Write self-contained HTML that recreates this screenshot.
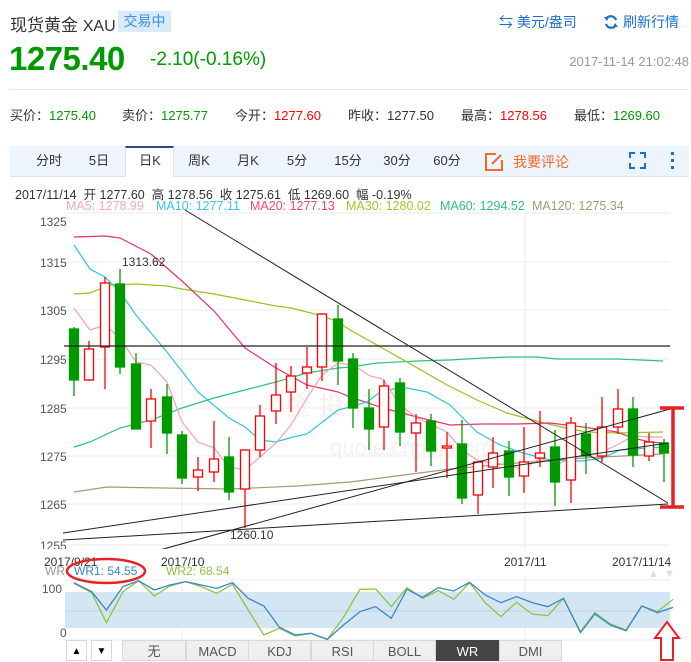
<!DOCTYPE html>
<html><head><meta charset="utf-8"><style>
*{margin:0;padding:0;box-sizing:border-box}
body{width:691px;height:662px;background:#fff;font-family:"Liberation Sans","Noto Sans CJK SC",sans-serif;position:relative;overflow:hidden;color:#333}
.a{position:absolute;white-space:nowrap}
.g{color:#009a00}.r{color:#f00}
.tab{position:absolute;top:146px;height:30px;line-height:30px;font-size:13px;color:#333;text-align:center}
.btn{position:absolute;top:640px;height:21px;line-height:21px;font-size:13px;text-align:center;background:#efefef;border:1px solid #d8d8d8;color:#555}
</style></head><body>
<div class="a" style="left:10px;top:11px;font-size:17px;color:#333">现货黄金 <span style="font-size:16px">XAU</span></div>
<div class="a" style="left:118px;top:11px;width:53px;height:21px;background:#d9eaf9;color:#3a8ee6;font-size:14px;line-height:21px;text-align:center">交易中</div>
<div class="a" style="left:499px;top:12px;font-size:14px;color:#1a6fc9">⇆ 美元/盎司</div>
<svg class="a" style="left:603px;top:14px" width="16" height="16" viewBox="0 0 16 16"><path d="M13 6A5.5 5.5 0 0 0 3 5M3 10a5.5 5.5 0 0 0 10 1" fill="none" stroke="#1a6fc9" stroke-width="2.2"/><path d="M1 3l3 4 2-4zM15 13l-3-4-2 4z" fill="#1a6fc9"/></svg>
<div class="a" style="left:623px;top:12px;font-size:14px;color:#1a6fc9">刷新行情</div>
<div class="a g" style="left:9px;top:40px;font-size:33px;font-weight:bold;letter-spacing:-0.5px">1275.40</div>
<div class="a g" style="left:150px;top:49px;font-size:19px">-2.10(-0.16%)</div>
<div class="a" style="right:2px;top:54px;font-size:13px;color:#999">2017-11-14 21:02:48</div>
<div class="a" style="left:10px;top:89px;width:679px;height:1px;background:#e5e5e5"></div>
<div class="a" style="left:10px;top:105px;font-size:13px">买价：<span class="g">1275.40</span></div>
<div class="a" style="left:122px;top:105px;font-size:13px">卖价：<span class="g">1275.77</span></div>
<div class="a" style="left:235px;top:105px;font-size:13px">今开：<span class="r">1277.60</span></div>
<div class="a" style="left:348px;top:105px;font-size:13px">昨收：<span>1277.50</span></div>
<div class="a" style="left:461px;top:105px;font-size:13px">最高：<span class="r">1278.56</span></div>
<div class="a" style="left:574px;top:105px;font-size:13px">最低：<span class="g">1269.60</span></div>
<div class="a" style="left:10px;top:146px;width:679px;height:31px;background:#eef4fb;border-bottom:1px solid #dbe4ee"></div>
<div class="a" style="left:125px;top:146px;width:49px;height:31px;background:#fff;border-top:2px solid #244d8a;border-left:1px solid #dbe4ee;border-right:1px solid #dbe4ee"></div>
<div class="tab" style="left:29px;width:40px">分时</div>
<div class="tab" style="left:79px;width:40px">5日</div>
<div class="tab" style="left:130px;width:40px">日K</div>
<div class="tab" style="left:179px;width:40px">周K</div>
<div class="tab" style="left:228px;width:40px">月K</div>
<div class="tab" style="left:277px;width:40px">5分</div>
<div class="tab" style="left:328px;width:40px">15分</div>
<div class="tab" style="left:377px;width:40px">30分</div>
<div class="tab" style="left:427px;width:40px">60分</div>
<svg class="a" style="left:484px;top:152px" width="20" height="20" viewBox="0 0 20 20"><path d="M12 2H2v16h16V8" fill="none" stroke="#f06a2a" stroke-width="2"/><path d="M8 12l9-9" stroke="#f06a2a" stroke-width="2"/></svg>
<div class="a" style="left:513px;top:152px;font-size:14px;color:#f06a2a">我要评论</div>
<svg class="a" style="left:629px;top:152px" width="17" height="17"><path d="M1 6V1h5M11 1h5v5M16 11v5h-5M6 16H1v-5" fill="none" stroke="#1a6fc9" stroke-width="2"/></svg>
<div class="a" style="left:671px;top:152px;width:3px;height:3px;background:#1a6fc9;box-shadow:0 7px 0 #1a6fc9,0 14px 0 #1a6fc9"></div>
<div class="a" style="left:15px;top:184px;font-size:12.5px;color:#333">2017/11/14&nbsp; 开 1277.60&nbsp; 高 1278.56&nbsp; 收 1275.61&nbsp; 低 1269.60&nbsp; 幅 -0.19%</div>
<div class="a" style="left:66px;top:199px;font-size:12.5px;color:#f7a8c0">MA5: 1278.99</div>
<div class="a" style="left:156px;top:199px;font-size:12.5px;color:#3cc8e2">MA10: 1277.11</div>
<div class="a" style="left:250px;top:199px;font-size:12.5px;color:#ed4a7a">MA20: 1277.13</div>
<div class="a" style="left:346px;top:199px;font-size:12.5px;color:#a5c72b">MA30: 1280.02</div>
<div class="a" style="left:440px;top:199px;font-size:12.5px;color:#2ec27e">MA60: 1294.52</div>
<div class="a" style="left:532px;top:199px;font-size:12.5px;color:#a89a72">MA120: 1275.34</div>

<svg class="a" style="left:0;top:0" width="691" height="662">
<g stroke="#ebebeb" stroke-width="1">
<line x1="64" y1="213" x2="670" y2="213"/><line x1="64" y1="262" x2="670" y2="262"/><line x1="64" y1="310" x2="670" y2="310"/><line x1="64" y1="359" x2="670" y2="359"/><line x1="64" y1="408" x2="670" y2="408"/><line x1="64" y1="456" x2="670" y2="456"/><line x1="64" y1="504" x2="670" y2="504"/><line x1="64" y1="545" x2="670" y2="545"/>
<line x1="182" y1="213" x2="182" y2="640"/><line x1="525" y1="213" x2="525" y2="640"/>
<line x1="64" y1="580" x2="670" y2="580"/><line x1="64" y1="640" x2="670" y2="640"/>
</g>
<g font-size="12" fill="#555" font-family="Liberation Sans,sans-serif">
<text x="40" y="226">1325</text><text x="40" y="267">1315</text><text x="40" y="315">1305</text><text x="40" y="364">1295</text><text x="40" y="413">1285</text><text x="40" y="461">1275</text><text x="40" y="509">1265</text><text x="40" y="550">1255</text>
</g>
<text x="330" y="455" font-size="22" fill="#f6f0f0">quote.cngold.org</text>
<text x="285" y="415" font-size="26" fill="#fbeeee">金 投 行 情</text>
<g stroke-width="1.2" fill="none">
<polyline stroke="#a89a72" points="74,492 107,487 163,488 230,489 297,486 350,482 450,469 517,463 583,458 663,454"/>
<polyline stroke="#2ec27e" points="74,447 90,442 120,428 151,420 182,408 214,398 245,390 276,382 307,373 338,368 350,367 377,363 417,361 450,360 483,358 510,357 537,357 557,359 617,359 663,361"/>
<polyline stroke="#99c21f" points="74,294 90,293 110,285 136,284 167,286 182,289 214,294 245,300 276,306 291,308 307,312 322,316 338,322 350,330 377,345 407,362 447,385 477,400 507,413 540,422 570,429 587,432 617,433 663,432"/>
<polyline stroke="#e8336b" points="74,237 105,236 120,238 151,254 182,281 214,311 245,348 276,368 307,385 338,392 350,397 383,408 417,417 450,425 483,424 517,424 550,423 583,427 617,432 633,438 650,442 663,443"/>
<polyline stroke="#2ec4e0" points="74,245 90,269 105,277 120,292 136,315 167,352 198,392 229,418 245,427 260,440 276,442 293,437 307,434 338,410 350,407 367,402 383,390 407,388 427,392 450,405 477,432 500,445 523,453 550,460 583,461 603,458 620,450 663,447"/>
<polyline stroke="#f5a0b8" points="74,308 90,330 105,325 120,338 136,362 151,365 167,382 182,422 198,442 214,448 229,467 245,470 260,457 276,443 291,425 307,398 322,375 338,363 353,365 370,376 383,379 400,405 417,418 432,425 447,432 462,450 477,460 493,463 510,465 523,470 540,458 557,465 570,458 587,455 600,453 617,445 633,436 650,437 663,437"/>
</g>
<g stroke-width="1.3">
<g stroke="#009a00" fill="#009a00">
<line x1="74" y1="327" x2="74" y2="396"/><rect x="69.5" y="329" width="9" height="51"/>
<line x1="120" y1="269" x2="120" y2="374"/><rect x="115.5" y="284" width="9" height="83"/>
<line x1="136" y1="353" x2="136" y2="429"/><rect x="131.5" y="364" width="9" height="65"/>
<line x1="167" y1="384" x2="167" y2="454"/><rect x="162.5" y="397" width="9" height="36"/>
<line x1="182" y1="431" x2="182" y2="484"/><rect x="177.5" y="435" width="9" height="43"/>
<line x1="229" y1="437" x2="229" y2="500"/><rect x="224.5" y="457" width="9" height="35"/>
<line x1="338" y1="305" x2="338" y2="385"/><rect x="333.5" y="319" width="9" height="42"/>
<line x1="353" y1="353" x2="353" y2="428"/><rect x="348.5" y="359" width="9" height="49"/>
<line x1="369" y1="389" x2="369" y2="450"/><rect x="364.5" y="408" width="9" height="21"/>
<line x1="400" y1="378" x2="400" y2="446"/><rect x="395.5" y="383" width="9" height="49"/>
<line x1="431" y1="414" x2="431" y2="466"/><rect x="426.5" y="421" width="9" height="30"/>
<line x1="462" y1="420" x2="462" y2="504"/><rect x="457.5" y="444" width="9" height="54"/>
<line x1="509" y1="441" x2="509" y2="496"/><rect x="504.5" y="451" width="9" height="26"/>
<line x1="555" y1="430" x2="555" y2="506"/><rect x="550.5" y="447" width="9" height="35"/>
<line x1="586" y1="423" x2="586" y2="474"/><rect x="581.5" y="434" width="9" height="22"/>
<line x1="633" y1="397" x2="633" y2="467"/><rect x="628.5" y="409" width="9" height="46"/>
<line x1="664" y1="439" x2="664" y2="482"/><rect x="659.5" y="443" width="9" height="10"/>
</g>
<g stroke="#f00" fill="#fff">
<line x1="89" y1="341" x2="89" y2="381"/><rect x="84.5" y="349" width="9" height="31"/>
<line x1="105" y1="277" x2="105" y2="389"/><rect x="100.5" y="283" width="9" height="64"/>
<line x1="151" y1="389" x2="151" y2="448"/><rect x="146.5" y="399" width="9" height="22"/>
<line x1="198" y1="457" x2="198" y2="491"/><rect x="193.5" y="470" width="9" height="7"/>
<line x1="214" y1="421" x2="214" y2="482"/><rect x="209.5" y="459" width="9" height="13"/>
<line x1="245" y1="450" x2="245" y2="528"/><rect x="240.5" y="450" width="9" height="39"/>
<line x1="260" y1="405" x2="260" y2="457"/><rect x="255.5" y="416" width="9" height="34"/>
<line x1="276" y1="363" x2="276" y2="424"/><rect x="271.5" y="395" width="9" height="16"/>
<line x1="291" y1="366" x2="291" y2="412"/><rect x="286.5" y="376" width="9" height="16"/>
<line x1="307" y1="347" x2="307" y2="389"/><rect x="302.5" y="367" width="9" height="6"/>
<line x1="322" y1="313" x2="322" y2="381"/><rect x="317.5" y="314" width="9" height="53"/>
<line x1="384" y1="380" x2="384" y2="450"/><rect x="379.5" y="386" width="9" height="41"/>
<line x1="416" y1="414" x2="416" y2="472"/><rect x="411.5" y="423" width="9" height="10"/>
<line x1="447" y1="432" x2="447" y2="478"/><rect x="442.5" y="446" width="9" height="2"/>
<line x1="478" y1="461" x2="478" y2="514"/><rect x="473.5" y="462" width="9" height="33"/>
<line x1="493" y1="437" x2="493" y2="488"/><rect x="488.5" y="453" width="9" height="14"/>
<line x1="524" y1="427" x2="524" y2="493"/><rect x="519.5" y="462" width="9" height="14"/>
<line x1="540" y1="411" x2="540" y2="467"/><rect x="535.5" y="453" width="9" height="5"/>
<line x1="571" y1="417" x2="571" y2="503"/><rect x="566.5" y="423" width="9" height="57"/>
<line x1="602" y1="397" x2="602" y2="462"/><rect x="597.5" y="427" width="9" height="29"/>
<line x1="618" y1="389" x2="618" y2="434"/><rect x="613.5" y="409" width="9" height="18"/>
<line x1="649" y1="433" x2="649" y2="461"/><rect x="644.5" y="442" width="9" height="14"/>
</g>
</g>
<g stroke="#222" stroke-width="1" fill="none">
<line x1="64" y1="346" x2="670" y2="346" stroke-width="1.3"/>
<line x1="185" y1="210" x2="668" y2="503"/>
<line x1="63" y1="533" x2="668" y2="443"/>
<line x1="63" y1="540" x2="668" y2="504"/>
<line x1="120" y1="561" x2="670" y2="409"/>
</g>
<g stroke="#e8202a" stroke-width="3.5"><line x1="673" y1="408" x2="673" y2="507"/><line x1="660" y1="408" x2="684" y2="408"/><line x1="660" y1="507" x2="684" y2="507"/></g>
<rect x="0" y="549" width="691" height="29" fill="#fff"/>
<g font-size="12" fill="#333">
<text x="122" y="266">1313.62</text><text x="230" y="539">1260.10</text>
<text x="44" y="566">2017/9/21</text><text x="161" y="566">2017/10</text><text x="504" y="566">2017/11</text><text x="612" y="566">2017/11/14</text>
<text x="45" y="575" fill="#999">WR</text><text x="74" y="575" fill="#3a86c8">WR1: 54.55</text><text x="166" y="575" fill="#8cc63f">WR2: 68.54</text>
<text x="42" y="593" fill="#555">100</text><text x="60" y="637" fill="#555">0</text>
</g>
<text x="648" y="577" font-size="11" fill="#ddd">▲</text><text x="664" y="577" font-size="11" fill="#ddd">▼</text>
<ellipse cx="106" cy="571" rx="39" ry="12" fill="none" stroke="#e8202a" stroke-width="2.5"/>
<rect x="65" y="592" width="605" height="36" fill="#d4e5f3"/>
<line x1="65" y1="611" x2="670" y2="611" stroke="#c0d4e6"/>
<g transform="translate(0,540) scale(0.4472,0.3333)" fill="none" stroke-width="1.3">
<polyline vector-effect="non-scaling-stroke" stroke="#8cc63f" points="165,130 205,158 238,248 275,155 310,122 345,168 380,138 415,125 450,140 485,160 520,133 555,210 590,285 625,265 660,288 695,280 732,298 768,232 805,148 840,147 875,200 910,143 945,175 980,152 1015,178 1050,128 1085,188 1120,230 1155,187 1190,222 1225,227 1260,175 1298,275 1330,218 1365,252 1400,270 1435,198 1470,215 1505,178"/>
<polyline vector-effect="non-scaling-stroke" stroke="#3a86c8" points="165,128 205,155 238,210 275,140 310,122 345,150 380,135 415,125 450,135 485,145 520,128 555,175 590,198 625,262 660,285 695,280 732,298 768,255 805,215 840,200 875,235 910,148 945,172 980,143 1015,153 1050,127 1085,165 1120,188 1155,170 1190,188 1225,200 1260,175 1298,278 1330,222 1365,255 1400,272 1435,198 1470,218 1505,202"/>
</g>
<path d="M667 622l12 16h-6v22h-12v-22h-6z" fill="#fff" stroke="#e8202a" stroke-width="2"/>
</svg>
<div class="btn" style="left:66px;width:21px;background:#fff;color:#000;font-size:10px">▲</div>
<div class="btn" style="left:91px;width:21px;background:#fff;color:#000;font-size:10px">▼</div>
<div class="btn" style="left:122px;width:64px">无</div>
<div class="btn" style="left:186px;width:63px">MACD</div>
<div class="btn" style="left:248px;width:63px">KDJ</div>
<div class="btn" style="left:311px;width:63px">RSI</div>
<div class="btn" style="left:373px;width:63px">BOLL</div>
<div class="btn" style="left:436px;width:63px;background:#444;color:#fff;border-color:#444">WR</div>
<div class="btn" style="left:499px;width:63px">DMI</div>
</body></html>
